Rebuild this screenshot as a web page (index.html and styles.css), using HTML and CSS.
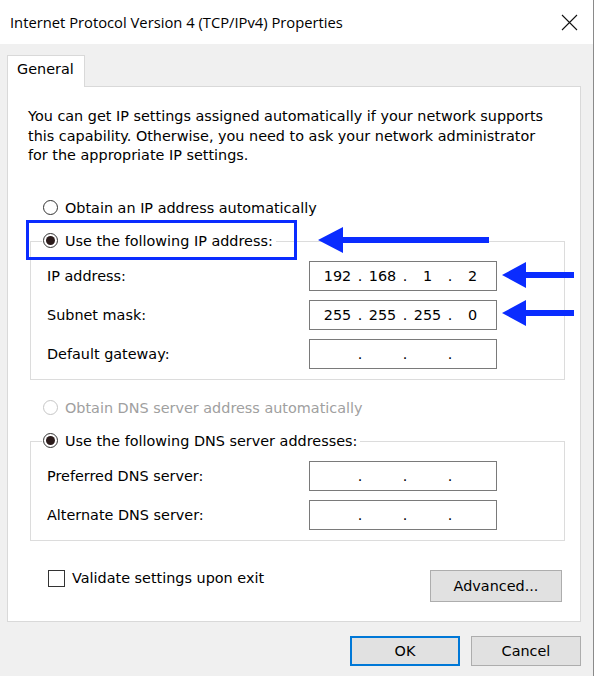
FILE: index.html
```html
<!DOCTYPE html>
<html lang="en">
  <head>
    <meta charset="UTF-8" />
    <meta name="viewport" content="width=device-width, initial-scale=1.0" />
    <title>Internet Protocol Version 4 (TCP/IPv4) Properties</title>
    <link rel="stylesheet" href="styles.css">
  </head>
  <body>
    <div class="window">
      <header class="titlebar">
        <span class="title">Internet Protocol Version 4 (TCP/IPv4) Properties</span>
        <svg class="close" width="17" height="17" viewBox="0 0 17 17">
          <path d="M1 1 L16 16 M16 1 L1 16" stroke="#111" stroke-width="1.1" fill="none" />
        </svg>
      </header>

      <div class="client">
        <div class="tabs">
          <div class="tab">General</div>
        </div>

        <div class="panel">
          <p class="intro">You can get IP settings assigned automatically if your network supports<br>this capability. Otherwise, you need to ask your network administrator<br>for the appropriate IP settings.</p>

          <label class="option first">
            <span class="radio"></span>Obtain an IP address automatically
          </label>

          <div class="group">
            <label class="group-title">
              <span class="radio checked"></span>Use the following IP address:
            </label>
            <div class="row first-row">
              <span class="label">IP address:</span>
              <div class="ip">
                <span class="seg">192</span><span class="dot">.</span><span class="seg">168</span><span class="dot">.</span><span class="seg">1</span><span class="dot">.</span><span class="seg">2</span>
              </div>
            </div>
            <div class="row">
              <span class="label">Subnet mask:</span>
              <div class="ip">
                <span class="seg">255</span><span class="dot">.</span><span class="seg">255</span><span class="dot">.</span><span class="seg">255</span><span class="dot">.</span><span class="seg">0</span>
              </div>
            </div>
            <div class="row">
              <span class="label">Default gateway:</span>
              <div class="ip">
                <span class="seg"></span><span class="dot">.</span><span class="seg"></span><span class="dot">.</span><span class="seg"></span><span class="dot">.</span><span class="seg"></span>
              </div>
            </div>
          </div>

          <label class="option disabled">
            <span class="radio"></span>Obtain DNS server address automatically
          </label>

          <div class="group">
            <label class="group-title">
              <span class="radio checked"></span>Use the following DNS server addresses:
            </label>
            <div class="row first-row">
              <span class="label">Preferred DNS server:</span>
              <div class="ip">
                <span class="seg"></span><span class="dot">.</span><span class="seg"></span><span class="dot">.</span><span class="seg"></span><span class="dot">.</span><span class="seg"></span>
              </div>
            </div>
            <div class="row">
              <span class="label">Alternate DNS server:</span>
              <div class="ip">
                <span class="seg"></span><span class="dot">.</span><span class="seg"></span><span class="dot">.</span><span class="seg"></span><span class="dot">.</span><span class="seg"></span>
              </div>
            </div>
          </div>

          <div class="panel-foot">
            <label class="check">
              <span class="box"></span>Validate settings upon exit
            </label>
            <button class="btn advanced">Advanced...</button>
          </div>
        </div>

        <div class="actions">
          <button class="btn ok">OK</button>
          <button class="btn">Cancel</button>
        </div>
      </div>

      <!-- annotations drawn over the dialog -->
      <div class="highlight"></div>
      <svg class="arrow arrow-legend" width="172" height="26" viewBox="0 0 172 26">
        <path d="M0 13 L25 0 L25 10 L171 10 L171 16 L25 16 L25 26 Z" fill="#0a2cff" />
      </svg>
      <svg class="arrow arrow-ip" width="72" height="26" viewBox="0 0 72 26">
        <path d="M0 13 L24 0 L24 10 L72 10 L72 16 L24 16 L24 26 Z" fill="#0a2cff" />
      </svg>
      <svg class="arrow arrow-mask" width="72" height="26" viewBox="0 0 72 26">
        <path d="M0 13 L24 0 L24 10 L72 10 L72 16 L24 16 L24 26 Z" fill="#0a2cff" />
      </svg>
    </div>
  </body>
</html>
```

FILE: styles.css
```css
* {
  box-sizing: border-box;
}
body {
  margin: 0;
  background: #fff;
  font-family: "DejaVu Sans", "Liberation Sans", sans-serif;
  font-size: 14.4px;
  color: #000;
}
.window {
  position: relative;
  width: 594px;
  height: 676px;
  border-right: 1px solid #8a8a8a;
  background: #f0f0f0;
  overflow: hidden;
}

/* title bar */
.titlebar {
  height: 44px;
  background: #fff;
  display: flex;
  align-items: center;
  justify-content: space-between;
  padding: 0 15px 0 10px;
}
.title {
  font-family: "Open Sans", "Noto Sans", sans-serif;
  font-size: 14.75px;
  margin-top: -1px;
}
.close {
  display: block;
}

/* client area */
.client {
  padding: 11px 12px 0 7px;
}
.tabs {
  display: flex;
}
.tab {
  width: 78px;
  height: 32px;
  background: #fff;
  border: 1px solid #d9d9d9;
  border-bottom: none;
  padding: 5px 0 0 9px;
  margin-bottom: -1px;
  position: relative;
  z-index: 1;
}
.panel {
  background: #fff;
  border: 1px solid #d9d9d9;
  padding: 20px 0 19px 0;
}
.intro {
  margin: 0 0 0 20px;
  line-height: 19.5px;
}

/* radio options */
.option,
.group-title {
  display: flex;
  align-items: center;
  height: 20px;
  line-height: 20px;
}
.option {
  margin-left: 35px;
}
.option.first {
  margin-top: 32px;
}
.option.disabled {
  margin-top: 18px;
  color: #a0a0a0;
}
.radio {
  width: 15px;
  height: 15px;
  border: 1px solid #333;
  border-radius: 50%;
  margin-right: 7px;
  display: flex;
  align-items: center;
  justify-content: center;
  flex: none;
}
.radio.checked::after {
  content: "";
  width: 9px;
  height: 9px;
  border-radius: 50%;
  background: #2b1b1b;
}
.disabled .radio {
  border-color: #c6c6c6;
}

/* group boxes */
.group {
  margin: 23px 15px 0 22px;
  border: 1px solid #dcdcdc;
  padding: 0 0 10px 16px;
}
.group-title {
  margin: -11px 0 0 -5px;
  background: #fff;
  width: fit-content;
  padding: 0 3px 0 1px;
}
.row {
  display: flex;
  align-items: center;
  margin-top: 9px;
}
.row.first-row {
  margin-top: 10px;
}
.label {
  width: 262px;
}
.ip {
  width: 188px;
  height: 30px;
  border: 1px solid #7a7a7a;
  display: flex;
  align-items: center;
  padding-left: 8px;
}
.seg {
  width: 39px;
  text-align: center;
}
.dot {
  width: 6px;
  text-align: center;
}

/* bottom of the panel */
.panel-foot {
  display: flex;
  justify-content: space-between;
  align-items: flex-start;
  margin: 29px 18px 0 40px;
}
.check {
  display: flex;
  align-items: center;
  height: 17px;
}
.box {
  width: 17px;
  height: 17px;
  border: 1px solid #333;
  margin-right: 7px;
}
.btn {
  font-family: inherit;
  font-size: 14.4px;
  color: #000;
  background: #e1e1e1;
  border: 1px solid #adadad;
  height: 30px;
  width: 110px;
  padding: 0;
}
.btn.advanced {
  width: 132px;
  height: 32px;
}
.btn.ok {
  border: 2px solid #0078d7;
}
.actions {
  display: flex;
  justify-content: flex-end;
  gap: 11px;
  margin-top: 14px;
}

/* annotations */
.highlight {
  position: absolute;
  left: 26px;
  top: 220px;
  width: 271px;
  height: 40px;
  border: 3px solid #0a2cff;
}
.arrow {
  position: absolute;
  display: block;
}
.arrow-legend {
  left: 318px;
  top: 227px;
}
.arrow-ip {
  left: 502px;
  top: 262px;
}
.arrow-mask {
  left: 502px;
  top: 300px;
}
```
